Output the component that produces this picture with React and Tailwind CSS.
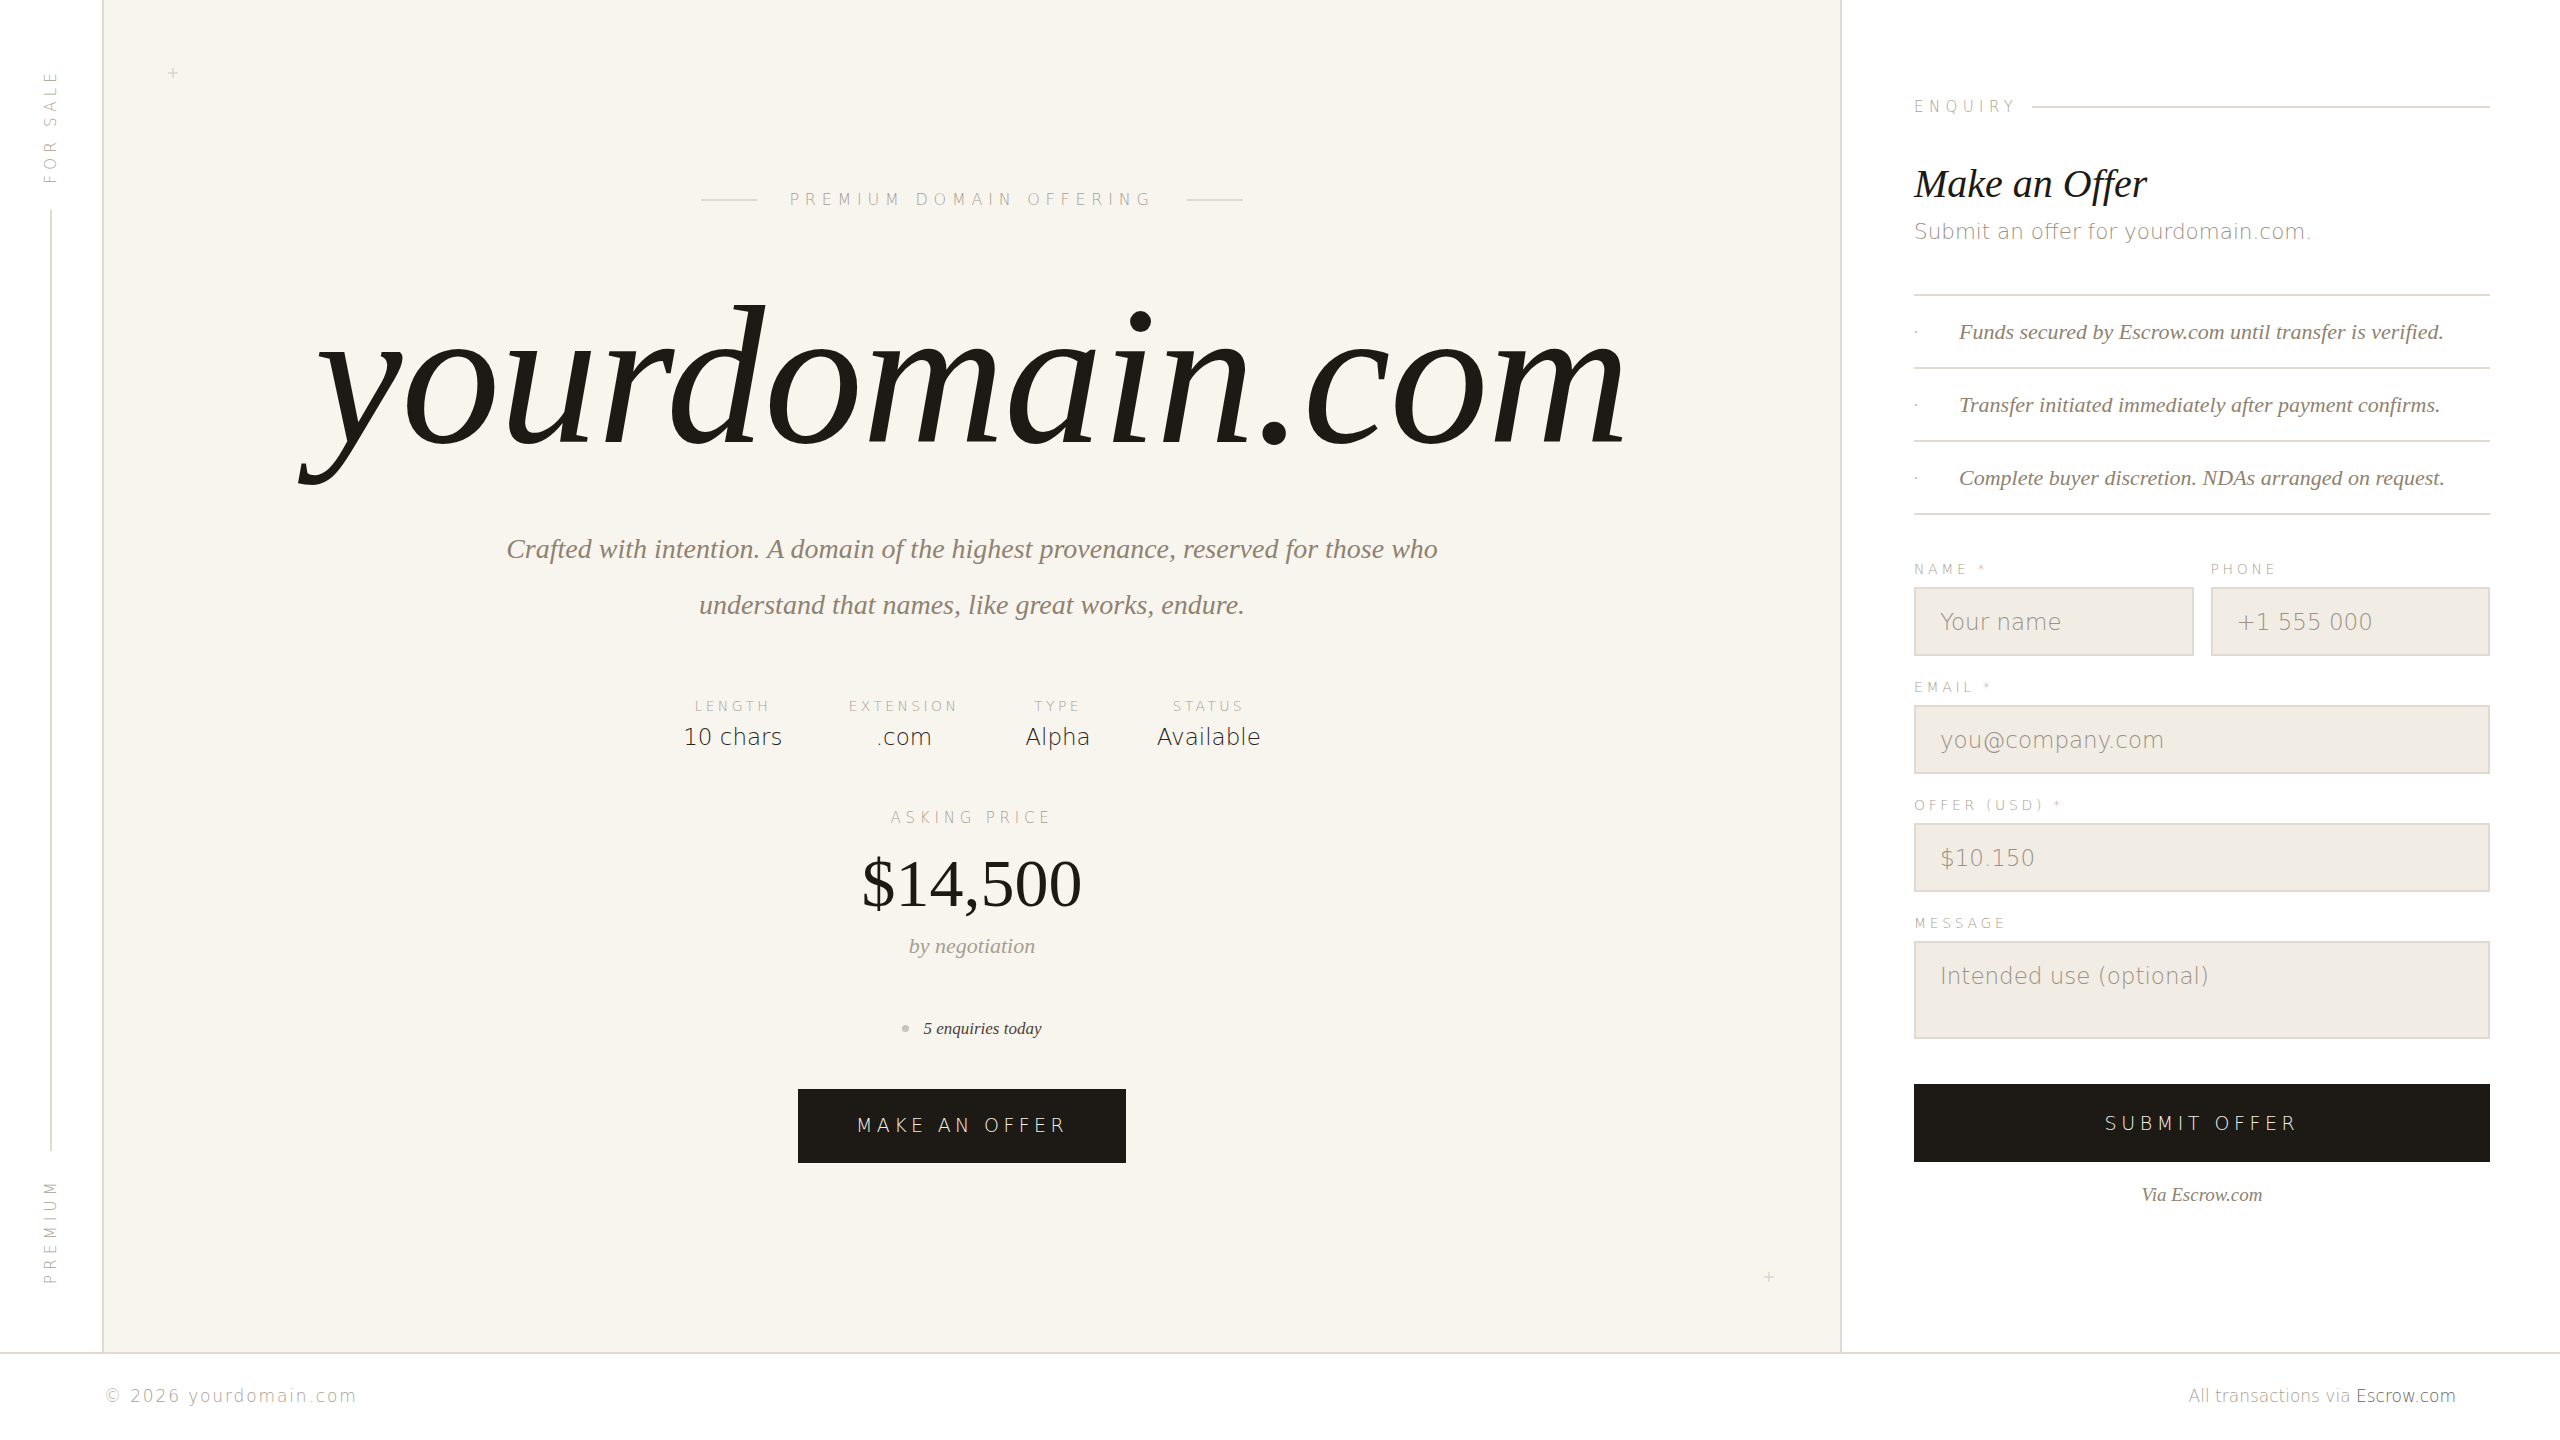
import React from "react";

const SERIF = "font-['Liberation_Serif','Times_New_Roman',serif]";
const SANS = "font-['DejaVu_Sans','Noto_Sans',sans-serif]";

const specs = [
  { label: "LENGTH", value: "10 chars" },
  { label: "EXTENSION", value: ".com" },
  { label: "TYPE", value: "Alpha" },
  { label: "STATUS", value: "Available" },
];

const assurances = [
  "Funds secured by Escrow.com until transfer is verified.",
  "Transfer initiated immediately after payment confirms.",
  "Complete buyer discretion. NDAs arranged on request.",
];

const Rail = () => (
  <aside className="flex w-[102px] shrink-0 flex-col items-center bg-white py-[68px]">
    <span
      className={`${SANS} rotate-180 text-[15px] font-light tracking-[0.35em] text-[#a89e90] [writing-mode:vertical-rl]`}
    >
      FOR SALE
    </span>
    <div className="my-[26px] w-[2px] flex-1 bg-[#e2dad0]" />
    <span
      className={`${SANS} rotate-180 text-[15px] font-light tracking-[0.35em] text-[#a89e90] [writing-mode:vertical-rl]`}
    >
      PREMIUM
    </span>
  </aside>
);

const Plus = ({ className }) => (
  <svg
    className={`absolute h-[10px] w-[10px] ${className}`}
    viewBox="0 0 10 10"
    fill="none"
    stroke="#dcd6c6"
    strokeWidth="1.5"
  >
    <path d="M5 0v10M0 5h10" />
  </svg>
);

const Hero = () => (
  <main className="relative flex flex-1 flex-col items-center justify-center border-x-2 border-[#e2dad0] bg-[#f8f5ef]">
    <Plus className="left-[64px] top-[68px]" />
    <Plus className="bottom-[70px] right-[66px]" />

    <div className="flex items-center gap-[32px]">
      <span className="h-[2px] w-[56px] bg-[#e2dad0]" />
      <span
        className={`${SANS} text-[16px] font-light leading-[20px] tracking-[0.36em] text-[#a89e90]`}
      >
        PREMIUM DOMAIN OFFERING
      </span>
      <span className="h-[2px] w-[56px] bg-[#e2dad0]" />
    </div>

    <h1
      className={`${SERIF} mt-[67px] text-[198px] italic leading-none tracking-[-0.005em] text-[#1d1a15]`}
    >
      yourdomain.com
    </h1>

    <p
      className={`${SERIF} mt-[46px] text-center text-[28px] italic leading-[56px] text-[#8f826f]`}
    >
      Crafted with intention. A domain of the highest provenance, reserved for those who
      <br />
      understand that names, like great works, endure.
    </p>

    <div className="mt-[64px] flex items-start gap-[66px]">
      {specs.map((s) => (
        <div key={s.label} className="flex flex-col items-center gap-[6px]">
          <span
            className={`${SANS} text-[14px] font-light leading-[18px] tracking-[0.24em] text-[#a89e90]`}
          >
            {s.label}
          </span>
          <span
            className={`${SANS} text-[23px] font-light leading-[32px] text-[#2a2520]`}
          >
            {s.value}
          </span>
        </div>
      ))}
    </div>

    <span
      className={`${SANS} mt-[55px] text-[15px] font-light leading-[20px] tracking-[0.32em] text-[#a89e90]`}
    >
      ASKING PRICE
    </span>
    <div
      className={`${SERIF} mt-[21px] text-[68px] leading-none text-[#1d1a15]`}
    >
      $14,500
    </div>
    <span
      className={`${SERIF} mt-[15px] text-[22px] italic leading-[28px] text-[#a89e90]`}
    >
      by negotiation
    </span>

    <div className="mt-[57px] flex items-center gap-[14px]">
      <span className="h-[7px] w-[7px] rounded-full bg-[#c9c2b8]" />
      <span
        className={`${SERIF} text-[17px] italic leading-[24px] text-[#4a4038]`}
      >
        5 enquiries today
      </span>
    </div>

    <button
      className={`${SANS} mr-[20px] mt-[48px] h-[74px] w-[328px] bg-[#1d1a15] text-[19px] font-light tracking-[0.23em] text-[#f5efe6]`}
    >
      MAKE AN OFFER
    </button>
  </main>
);

const Field = ({ label, placeholder, textarea }) => (
  <label className="flex flex-col gap-[9px]">
    <span
      className={`${SANS} text-[14px] font-light leading-[18px] tracking-[0.26em] text-[#a89e90]`}
    >
      {label}
    </span>
    {textarea ? (
      <textarea
        placeholder={placeholder}
        className={`${SANS} h-[98px] resize-none border-2 border-[#e2dad0] bg-[#f1ece4] px-[24px] py-[18px] text-[23px] font-light leading-[30px] text-[#2a2520] outline-none placeholder:text-[#9c9285]`}
      />
    ) : (
      <input
        placeholder={placeholder}
        className={`${SANS} h-[69px] w-full border-2 border-[#e2dad0] bg-[#f1ece4] px-[24px] text-[23px] font-light text-[#2a2520] outline-none placeholder:text-[#9c9285]`}
      />
    )}
  </label>
);

const Enquiry = () => (
  <section className="flex w-[718px] shrink-0 flex-col bg-white pl-[72px] pr-[70px] pt-[97px]">
    <div className="flex items-center gap-[14px]">
      <span
        className={`${SANS} text-[15px] font-light leading-[20px] tracking-[0.36em] text-[#a89e90]`}
      >
        ENQUIRY
      </span>
      <span className="h-[2px] flex-1 bg-[#e2dad0]" />
    </div>

    <h2
      className={`${SERIF} mt-[47px] text-[40px] italic leading-none text-[#1d1a15]`}
    >
      Make an Offer
    </h2>
    <p
      className={`${SANS} mt-[13px] text-[21.5px] font-light leading-[30px] text-[#9a9084]`}
    >
      Submit an offer for yourdomain.com.
    </p>

    <ul className="mt-[47px] border-t-2 border-[#e2dad0]">
      {assurances.map((a) => (
        <li
          key={a}
          className="flex h-[73px] items-center border-b-2 border-[#e2dad0]"
        >
          <span className="w-[45px] text-[14px] leading-none text-[#b8afa3]">·</span>
          <span
            className={`${SERIF} text-[22px] italic leading-[28px] text-[#8f826f]`}
          >
            {a}
          </span>
        </li>
      ))}
    </ul>

    <form className="mt-[45px] flex flex-col gap-[22px]">
      <div className="grid grid-cols-2 gap-[17px]">
        <Field label="NAME *" placeholder="Your name" />
        <Field label="PHONE" placeholder="+1 555 000" />
      </div>
      <Field label="EMAIL *" placeholder="you@company.com" />
      <Field label="OFFER (USD) *" placeholder="$10.150" />
      <Field label="MESSAGE" placeholder="Intended use (optional)" textarea />
    </form>

    <button
      className={`${SANS} mt-[45px] h-[78px] w-full bg-[#1d1a15] text-[19px] font-light tracking-[0.24em] text-[#f5efe6]`}
    >
      SUBMIT OFFER
    </button>
    <span
      className={`${SERIF} mt-[21px] text-center text-[19px] italic leading-[24px] text-[#8f826f]`}
    >
      Via Escrow.com
    </span>
  </section>
);

export default function App() {
  return (
    <div className="flex h-[1440px] w-full flex-col bg-white">
      <div className="flex h-[1352px]">
        <Rail />
        <Hero />
        <Enquiry />
      </div>
      <footer className="flex h-[88px] items-center justify-between border-t-2 border-[#e2dad0] bg-white px-[104px]">
        <span
          className={`${SANS} text-[17px] font-light tracking-[0.11em] text-[#a89e90]`}
        >
          © 2026 yourdomain.com
        </span>
        <span className={`${SANS} text-[17px] font-light text-[#a89e90]`}>
          All transactions via <span className="text-[#6b6258]">Escrow.com</span>
        </span>
      </footer>
    </div>
  );
}
